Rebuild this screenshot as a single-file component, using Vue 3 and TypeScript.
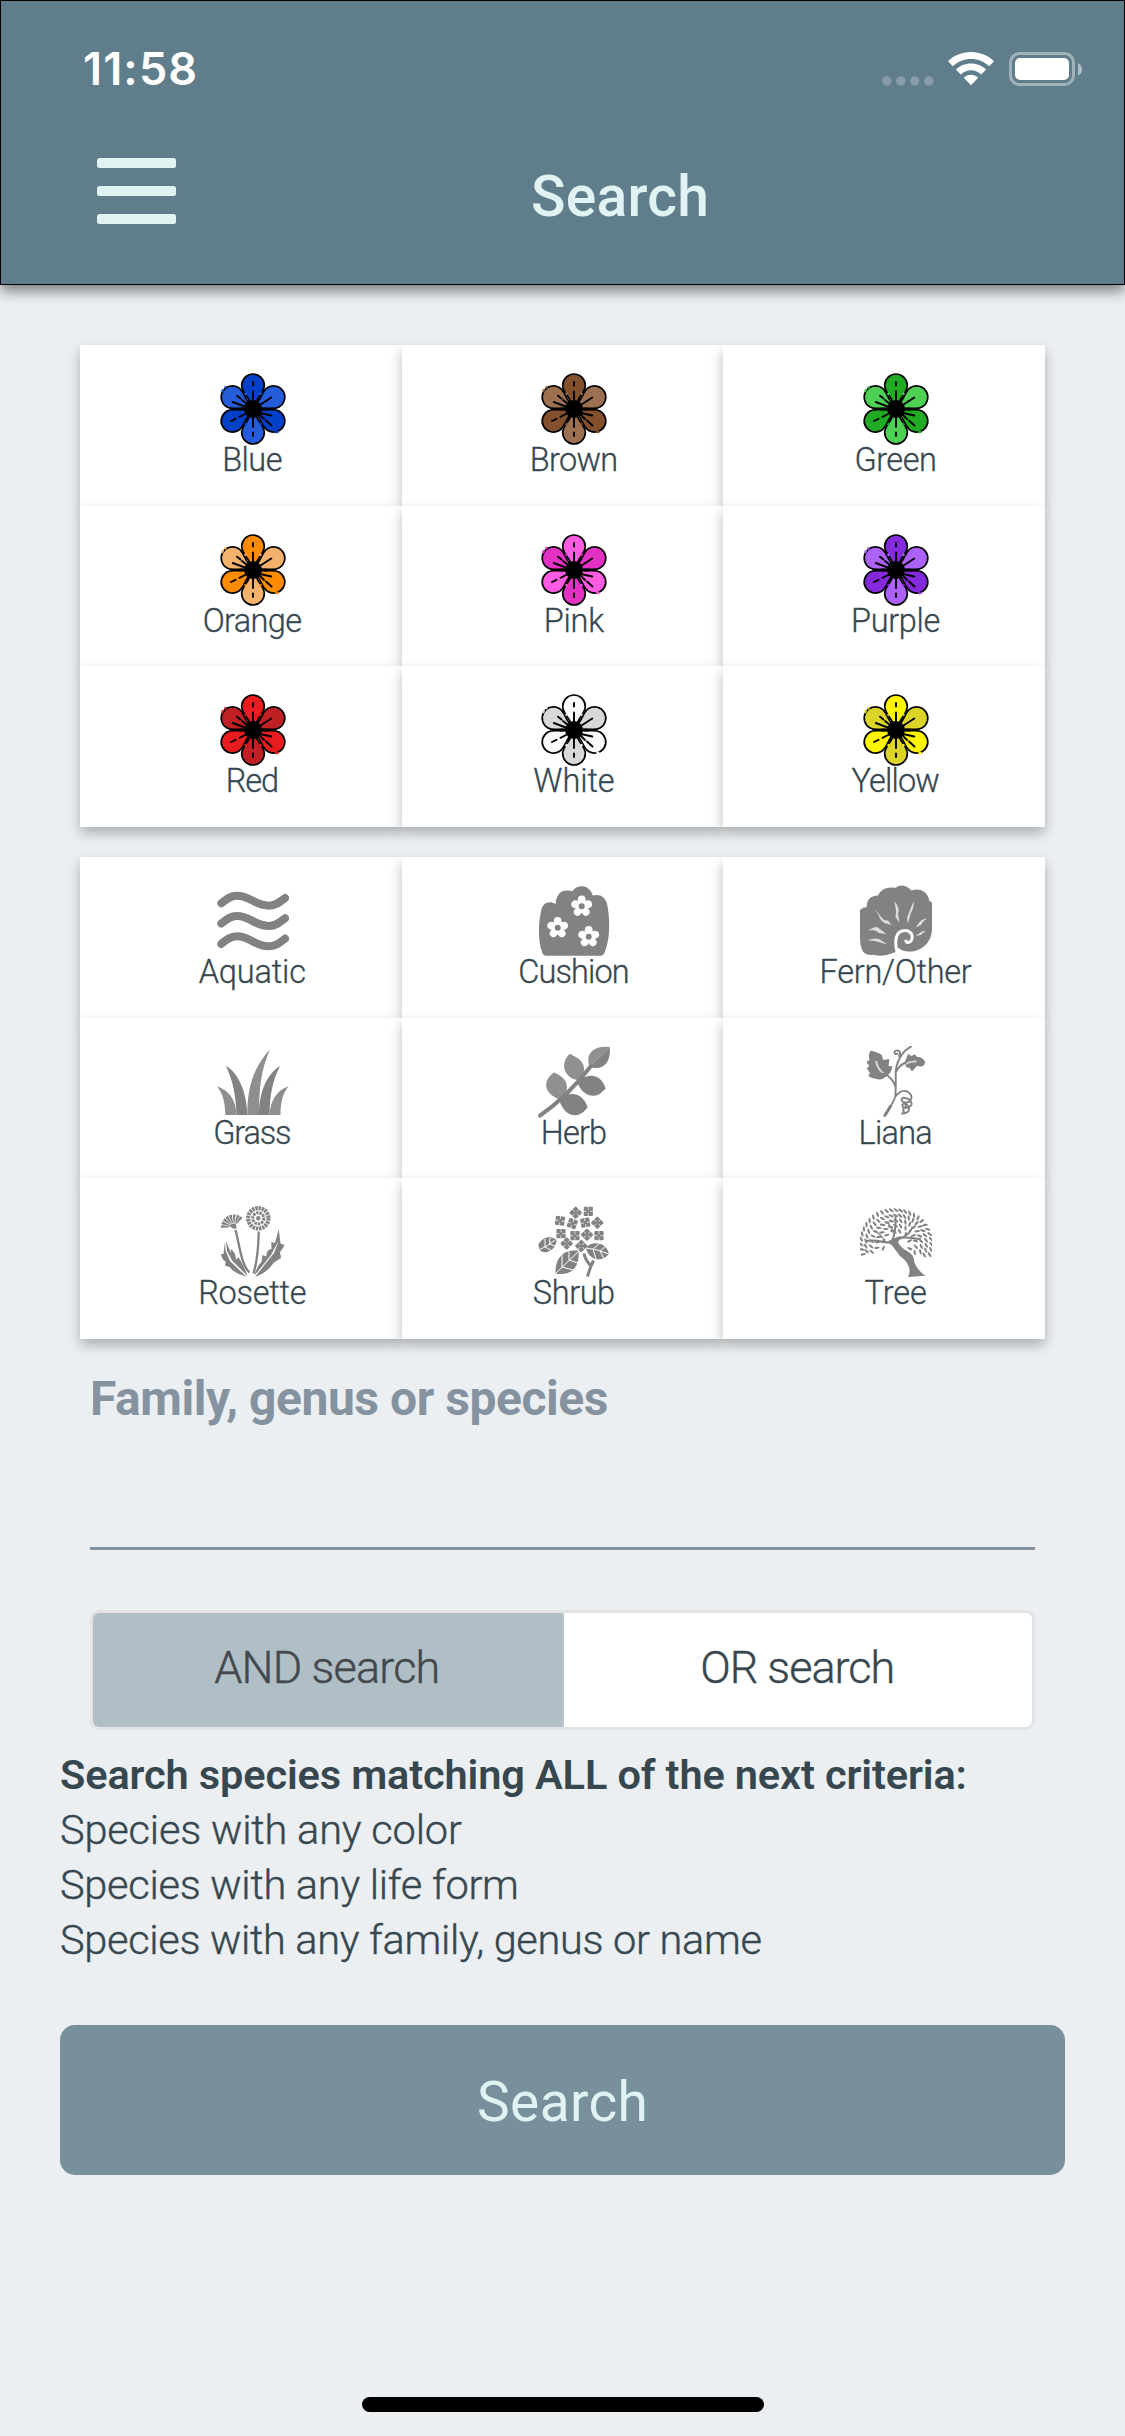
<script setup lang="ts">
interface ColorOption { name: string; width: number; main: string; alt: string }
interface FormOption { name: string; width: number; icon: string }
interface Leaf { x: number; y: number; r: number }

const colors: ColorOption[] = [
  { name: 'Blue', width: 58, main: '#0340c8', alt: '#245dd9' },
  { name: 'Brown', width: 86, main: '#83502d', alt: '#9e7052' },
  { name: 'Green', width: 80, main: '#21ab24', alt: '#4dd053' },
  { name: 'Orange', width: 97, main: '#ff8c00', alt: '#f4b26c' },
  { name: 'Pink', width: 58, main: '#ff5be3', alt: '#e231c3' },
  { name: 'Purple', width: 87, main: '#8429dc', alt: '#ac62f8' },
  { name: 'Red', width: 51, main: '#e91c1f', alt: '#be2023' },
  { name: 'White', width: 79, main: '#fcfafb', alt: '#d8d8d8' },
  { name: 'Yellow', width: 86, main: '#fff500', alt: '#ddd428' },
]

const forms: FormOption[] = [
  { name: 'Aquatic', width: 105, icon: 'aquatic' },
  { name: 'Cushion', width: 109, icon: 'cushion' },
  { name: 'Fern/Other', width: 150, icon: 'fern' },
  { name: 'Grass', width: 76, icon: 'grass' },
  { name: 'Herb', width: 64, icon: 'herb' },
  { name: 'Liana', width: 72, icon: 'liana' },
  { name: 'Rosette', width: 106, icon: 'rosette' },
  { name: 'Shrub', width: 80, icon: 'shrub' },
  { name: 'Tree', width: 60, icon: 'tree' },
]

const criteria = [
  { text: 'Species with any color', width: 399 },
  { text: 'Species with any life form', width: 456 },
  { text: 'Species with any family, genus or name', width: 699 },
]

const petalAngles = [0, 60, 120, 180, 240, 300]
const cushionFlowers = [[43.7, 21.3], [19.7, 42.7], [50.7, 51.7]]
const fiveAngles = [0, 72, 144, 216, 288]
const rayAngles = [-88, -70, -52, -34, -16, 3, 22, 38]

const shrubFlowers = [
  [37.7, 6.7, 45], [50.3, 5.3, 0], [22, 14.7, 8], [34.3, 17.6, 20], [47.3, 16.7, -10], [59.3, 16.7, 45],
  [23, 27.7, 0], [37, 29.7, 0], [49, 28.7, 45], [61, 29.7, 0], [28.7, 37.5, 45], [43.3, 40, 45],
]

// Foliage: rings of small leaves fanning out from the fork of the trunk.
const treeLeaves: Leaf[] = []
const rings = [
  { d: 0.96, n: 27 }, { d: 0.82, n: 24 }, { d: 0.68, n: 19 }, { d: 0.54, n: 14 }, { d: 0.4, n: 8 },
]
rings.forEach((ring, k) => {
  for (let i = 0; i < ring.n; i++) {
    const a = -196 + (212 * (i + (k % 2) * 0.4)) / (ring.n - 1)
    const t = (a * Math.PI) / 180
    const jitter = Math.sin(i * 12.9 + k * 7.3)
    const d = ring.d + jitter * 0.035
    treeLeaves.push({
      x: 36 + Math.cos(t) * 35.5 * d,
      y: 38.5 + Math.sin(t) * 37 * d,
      r: a + 90 + jitter * 60,
    })
  }
})

// Spreads the letters of a line so that it takes the given width.
const vFit = {
  mounted(el: HTMLElement, binding: { value: number }) {
    const size = parseFloat(getComputedStyle(el).fontSize)
    const count = (el.textContent ?? '').trim().length
    const spacing = (binding.value + size * 0.07 - el.getBoundingClientRect().width) / (count - 1)
    el.style.letterSpacing = `${spacing}px`
    el.style.marginRight = `${-spacing}px`
  },
}
</script>

<template>
  <div class="screen">
    <header class="header">
      <div class="status">
        <span v-fit="111" class="time">11:58</span>
        <div class="indicators">
          <svg class="dots" width="52" height="10" viewBox="0 0 52 10">
            <circle v-for="n in 4" :key="n" :cx="n * 14 - 9.2" cy="5" r="4.7" fill="#fff" fill-opacity=".25" />
          </svg>
          <svg class="wifi" width="46" height="34" viewBox="0 0 46 34">
            <path fill="#fff" d="M23 0C32 0 40.200 3.500 46 9.200L41.200 14.200C36.500 9.600 30 6.900 23 6.900S9.500 9.600 4.800 14.200L0 9.200C5.800 3.500 14 0 23 0ZM23 11.400C28.900 11.400 34.200 13.700 38.100 17.400L33.200 22.500C30.500 20 27 18.300 23 18.300S15.500 20 12.800 22.500L7.900 17.400C11.800 13.700 17.100 11.400 23 11.400ZM23 22.800C25.800 22.800 28.300 23.900 30.200 25.700L23 33.200L15.800 25.700C17.700 23.900 20.200 22.800 23 22.800Z" />
          </svg>
          <svg class="battery" width="74" height="35" viewBox="0 0 74 35">
            <rect x="1.500" y="1.500" width="63" height="31" rx="9" fill="none" stroke="#fff" stroke-opacity=".4" stroke-width="3" />
            <rect x="6" y="6" width="54" height="22" rx="5" fill="#fff" />
            <path d="M69 11.500Q73 13 73 17.500T69 23.500Z" fill="#fff" fill-opacity=".5" />
          </svg>
        </div>
      </div>
      <div class="nav">
        <svg class="menu" width="79" height="66" viewBox="0 0 79 66">
          <rect v-for="n in 3" :key="n" x="0" :y="n * 28 - 28" width="79" height="10" rx="2.500" fill="#e0f2f1" />
        </svg>
        <h1 v-fit="174" class="title">Search</h1>
      </div>
    </header>

    <main class="content">
      <section class="grid">
        <div v-for="c in colors" :key="c.name" class="cell">
          <svg class="icon" viewBox="0 0 72 72">
            <path
              v-for="(a, i) in petalAngles" :key="a"
              d="M36 36L31 25.500C28 20.500 24.700 17.500 24.700 12.500A11.300 11.500 0 0 1 47.300 12.500C47.300 17.500 44 20.500 41 25.500Z"
              :fill="i % 2 ? c.alt : c.main" stroke="#000" stroke-width="1.700" :transform="`rotate(${a} 36 36)`"
            />
            <path :stroke="c.alt" stroke-width="2.200" d="M4.800 19L6.200 16.200M7.600 15L9.400 13.300M44 19.800L43 21.800M28 19.800L29 21.800" />
            <path :stroke="c.main" stroke-width="2.200" d="M58.500 59.300L61.500 58.700M28 52.200L29 50.200M44 52.200L43 50.200" />
            <circle cx="36" cy="36" r="9" fill="#000" />
            <path
              fill="none" stroke="#000" stroke-width="1.900" stroke-linecap="round"
              d="M36 9V12.500M36 18.500V28M36 44V54M36 59.500V63M42 32.500L54.300 24.500M43 40L54.300 42.500M42.500 41.500L47 46M49 47.500L54.500 52.500M45 36H48M24 36H27M15.800 29L29 34M20 22.700L23.500 25.500M25 27L30 31M14 48L18.500 45.800M22.500 43.800L29 40.500M30 46.500L32 43M42 25.500L40 29"
            />
          </svg>
          <span v-fit="c.width" class="label">{{ c.name }}</span>
        </div>
      </section>

      <section class="grid forms">
        <div v-for="f in forms" :key="f.name" class="cell">
          <svg class="icon" viewBox="0 0 72 72">
            <g v-if="f.icon === 'aquatic'" fill="none" stroke="#828282" stroke-width="8" stroke-linecap="round">
              <path v-for="n in 3" :key="n" :transform="`translate(0 ${(n - 1) * 20.3})`" d="M4.300 18.300C9 14.500 13 10.700 20 10.700C33 10.700 38 20.700 52 20.700C59 20.700 63 17 68 13" />
            </g>

            <g v-else-if="f.icon === 'cushion'">
              <path fill="#828282" d="M8 70.700Q5.500 70.700 4.200 67.500C-.500 55 .500 37 3.300 25C5 17.500 11.500 15.200 17.700 19C18 10 23 3 34.300 6.300C40-2 52 0 54.800 10.500C62 8.500 67 12 69 18.500C72 33 72.500 53 67 66.500Q65.500 70.700 62.500 70.700Z" />
              <g v-for="(p, i) in cushionFlowers" :key="i" :transform="`translate(${p[0]} ${p[1]})`">
                <ellipse v-for="a in fiveAngles" :key="a" cx="0" cy="-6.500" rx="3.900" ry="4.300" fill="#fff" :transform="`rotate(${a})`" />
                <circle r="5" fill="#fff" /><circle r="3" fill="#828282" />
              </g>
            </g>

            <g v-else-if="f.icon === 'fern'">
              <path fill="#828282" d="M0 25Q3 22 6.700 22Q6.500 11 18 10.500Q22 1 35.500 2.700Q43-3 51.500 5.500C60 2.500 68 7 69.500 16L72 17.500V43C72 59 60 66.500 50 66.500C44 66.500 40.500 65 38.500 62.500L36 67C27 70.500 20 72 14 69.800Q6 71 2.500 66Q0 60 0 54Z" />
              <path fill="none" stroke="#fff" stroke-width="3" stroke-linecap="round" d="M37 67C34.500 56 35.500 47 43 45.700C49 44.700 53 48.500 52 53.500C51 58 47 58.500 45.800 56" />
              <path fill="#dedede" d="M14.500 23.500L22 33Q24 36 28 35.500L31.500 40L24.500 38Q20 35 19 31ZM34.300 16C38 21 40 25 38 29L39.500 38L35.500 32Q36 28 36 25ZM53.700 16C54 22 52.500 25 50.500 29L48 38.500L47 33Q48.500 29 50 25ZM67 33.500Q61 34 59 38L55.500 42.500L61 40Q62 37 67 33.500ZM66 46.500Q61 45.500 60 48L55.500 51L61 50Q62 48 66 46.500ZM7.500 45.500L15 42Q18 41.500 21 45L26.500 49L19 48Q16 45.500 13 45ZM7 55.500Q15 52.500 19 54L27.500 59.500L20 57.500Q14 55 7 55.500Z" />
            </g>

            <g v-else-if="f.icon === 'grass'">
              <path fill="#8f8f8f" d="M53 3.300C36 22 30.300 42 30.300 69H42C42 42 44 24 53 3.300ZM71.700 40.300C60 44 53 55 52.700 69H63.500C63.500 56 66 47 71.700 40.300ZM0 40.300C11 44 19 53 19.500 69H8.300C8.300 57 6 48 0 40.300Z" />
              <path fill="#828282" d="M63 20C50 28 42 46 42 69H52.700C52.700 50 55 36 63 20ZM9 20C22 27 30 48 30.300 69H19.500C19 50 16 35 9 20Z" />
            </g>

            <g v-else-if="f.icon === 'herb'">
              <path fill="#909090" d="M51.500 21C47 8 55-1 71.700 1ZM41.500 34C29 34 20 20 31 8.500Q32 7.500 34 9C48 15 49 25 41.500 34ZM23.500 54C9 50 2 38 15 27Q16 26 18 27.500C31 33 32 44 23.500 54Z" />
              <path fill="#828282" d="M51.500 21L71.700 1C73 16 66 25 51.500 21ZM39 36C50 26 63 28 67.500 42Q68 43.500 66 44C58 54 45 51 39 36ZM21 53.500C32 44 45 47 49.500 61Q49.500 62.500 48 63.200C39 74 26 70 21 53.500Z" />
              <path fill="none" stroke="#828282" stroke-width="4" stroke-linecap="round" d="M2 69.700Q30 50 53 20" />
            </g>

            <g v-else-if="f.icon === 'liana'">
              <path fill="#828282" d="M10.700 4.700Q18 6 21.700 9L23.300 14L29.300 13L28.500 20L32.500 20.500Q31.500 25 30 27.300L26 30.500Q22 34.500 17.700 33.300Q12 33 8.300 30L10 27L6.700 22.300L9.300 20L6.500 16L9.500 14Q8 8 10.700 4.700ZM45 16L48 8L51.500 10L55 8.200L57 11Q62 10.500 65.300 16Q64 20 61.500 20.500L57 20L52 25.500L49.500 22L46 21Z" />
              <path fill="none" stroke="#d6d6d6" stroke-width="2" d="M16 15Q17 22 23.500 27.500M56.500 15.500Q50 15 45.500 18" />
              <path fill="none" stroke="#828282" stroke-width="1.900" stroke-linecap="round" d="M23 27.500L28 30Q34 35 35.500 41M51 .500L45 4.700Q36 15 35.700 26Q36 42 35.300 50Q35 54 24.500 70M46 16.500Q39 19 36 26M39 10C42 6 38 3.500 35.500 4.800C33 6.500 36 9.500 37.500 7.500M35 51Q41 43 47 45.500C54 49 52 56 46 56.500C41 57 40 50.500 45 52C52 53 54 60 48 61.500C41 63 41 57 45 58C50 59 52 67 42 67.500M46 60C43 62 42 65 45 67" />
              <path stroke="#828282" stroke-width="3" d="M31 59.500L24.500 70" />
            </g>

            <g v-else-if="f.icon === 'rosette'">
              <g fill="none" stroke="#828282">
                <circle cx="41.300" cy="12.300" r="10.200" stroke-width="4.200" stroke-dasharray="2.400 .8" />
                <circle cx="41.300" cy="12.300" r="5.500" stroke-width="3" stroke-dasharray="2.400 .9" />
                <circle cx="41.300" cy="12.300" r="1.200" stroke-width="2" />
                <path stroke-width="2.300" d="M18.500 24C22 36 24 59 32.500 66.500M41.700 25.500C41.500 40 40 56 36.500 67.500" />
              </g>
              <path v-for="a in rayAngles" :key="a" fill="#828282" d="M-.400-4L-1.500-12.500H1.500L.400-4Z" :transform="`translate(16.700 21) rotate(${a})`" />
              <path fill="#828282" d="M12.500 20Q16 16 19 18.500L19.500 22.500Q16 23.500 12.500 20Z" />
              <path fill="#828282" d="M61.700 23L63.500 37.500L67.500 39Q65 44 63 46L64 52L57 56.500Q50 67 38 71L49 57L57 47L62 34L54 49L40 66.500L37.500 69.500Q40 60 44.500 56L45.500 49L49.500 50.500Q49 44 54.500 43L54.300 36L58 37Z" />
              <path fill="#828282" d="M8 35.500L8.500 44.500L13 55L29.500 70.800Q17 67 12.500 61L8 59.500L8.700 55.500Q5 54 4 48L6.500 48ZM9 35L14 47L14 43Q19 47 19 54L21 51Q26 57 30.500 70L15 54.500L10 45Z" />
            </g>

            <g v-else-if="f.icon === 'shrub'">
              <g v-for="(p, i) in shrubFlowers" :key="i" :transform="`translate(${p[0]} ${p[1]}) rotate(${p[2]})`">
                <rect x="-4.600" y="-4.600" width="9.200" height="9.200" rx="1" fill="#828282" />
                <path stroke="#fff" stroke-width=".7" d="M0-5V-1.500M0 1.500V5M-5 0H-1.500M1.500 0H5" />
              </g>
              <path fill="#828282" d="M.200 39C4 31 13 29 18.500 34C18 44 8 49 2 44.500ZM40.500 45C30 43 17 48 17.500 67.500C31 70 42 64 40.500 45ZM48 42C52 35 68 35 71 47.500C66 56 51 56 48 42Z" />
              <path fill="none" stroke="#fff" stroke-width="1" d="M1 44Q10 40 17 34M7 33V41L13 44M12 32L11.500 38L17 40M18 67L40 46M24 48.500V61L35 64M31 45.500V54L40 57M48 42Q59 43 71 48M55 43L62 37M55 43L58 53M62 45L68 40M62 45L66 53" />
              <path fill="none" stroke="#828282" stroke-width="3" d="M46 47.500Q47 53 52 59M55.500 54.500L52.500 61L49.500 70.500" />
            </g>

            <g v-else>
              <ellipse v-for="(l, i) in treeLeaves" :key="i" rx="1.100" ry="2.800" fill="#828282" :transform="`translate(${l.x} ${l.y}) rotate(${l.r})`" />
              <path fill="none" stroke="#828282" stroke-linecap="round" stroke-width="2" d="M31 37C35 30 36 22 35.500 11M30 36.500C24 37 18 33 6 35M35 35C43 29 49 32 60 33" />
              <path fill="none" stroke="#828282" stroke-linecap="round" stroke-width="1.400" d="M25 36C23 31 20 28 15 25M43 31C48 29 51 26 52 21M36 27C31 23 29 20 28 16" />
              <path fill="#828282" d="M27 35.500Q33 33 37 31L42 30L38 36Q40 41 47 45Q54 48 54.500 57Q58 65 65.500 69.700L48 71Q51 65 48.500 60Q46 54 40 50Q34 42 31.500 39Z" />
            </g>
          </svg>
          <span v-fit="f.width" class="label">{{ f.name }}</span>
        </div>
      </section>

      <div class="field">
        <label v-fit="515" class="field-label">Family, genus or species</label>
        <div class="input"></div>
      </div>

      <div class="toggle">
        <div class="option active"><span v-fit="223">AND search</span></div>
        <div class="option"><span v-fit="192">OR search</span></div>
      </div>

      <div class="summary">
        <div><strong v-fit="904">Search species matching ALL of the next criteria:</strong></div>
        <div v-for="c in criteria" :key="c.text"><span v-fit="c.width">{{ c.text }}</span></div>
      </div>

      <button class="submit" type="button"><span v-fit="167">Search</span></button>
    </main>

    <div class="home-indicator"></div>
  </div>
</template>

<style>
body {
  background: #ebeff2;
}
</style>

<style scoped>
.screen {
  box-sizing: border-box;
  width: 1125px;
  height: 2436px;
  display: flex;
  flex-direction: column;
  overflow: hidden;
  background: #ebeff2;
  color: #37474f;
  font-family: Roboto, "Liberation Sans", sans-serif;
}
.screen span,
.screen strong,
.field-label {
  display: inline-block;
  white-space: nowrap;
}
.header {
  box-sizing: border-box;
  flex: none;
  height: 285px;
  border: 1px solid #000;
  background: #607d8b;
  box-shadow: 0 6px 13px rgba(0, 0, 0, 0.48);
}
.status {
  display: flex;
  justify-content: space-between;
  height: 54px;
  padding: 41px 41px 0 82px;
}
.time {
  color: #fff;
  font: 600 45px/54px Inter, sans-serif;
}
.indicators {
  display: flex;
  align-items: flex-start;
  padding-top: 10px;
}
.dots {
  margin: 24px 14px 0 0;
}
.wifi {
  margin-right: 15px;
}
.nav {
  display: flex;
  align-items: flex-start;
  padding-left: 96px;
}
.menu {
  margin-top: 62px;
}
.title {
  margin: 67px 0 0 355px;
  color: #e0f2f1;
  font-size: 57px;
  font-weight: 500;
  line-height: 68px;
}
.content {
  flex: 1;
  display: flex;
  flex-direction: column;
  padding: 60px 60px 0;
}
.grid {
  display: grid;
  grid-template-columns: repeat(3, 1fr);
  grid-template-rows: repeat(3, 160.5px);
  margin: 0 20px;
}
.forms {
  margin-top: 30.5px;
}
.cell {
  display: flex;
  flex-direction: column;
  align-items: center;
  padding: 28px 0 0 23px;
  background: #fff;
  box-shadow: 0 6px 12px rgba(0, 0, 0, 0.27);
}
.icon {
  width: 72px;
  height: 72px;
  margin-left: 1px;
}
.label {
  font-size: 32.5px;
  font-weight: 300;
  line-height: 30px;
  -webkit-text-stroke: 0.3px currentColor;
}
.field {
  display: flex;
  flex-direction: column;
  align-items: flex-start;
  margin: 32.5px 30px 0;
}
.field-label {
  color: #8593a0;
  font-size: 48px;
  font-weight: 700;
  line-height: 56px;
}
.input {
  box-sizing: border-box;
  width: 100%;
  height: 123px;
  border-bottom: 3px solid #8593a0;
}
.toggle {
  box-sizing: border-box;
  display: flex;
  height: 120px;
  margin: 60px 30px 0;
  overflow: hidden;
  border: 3px solid #e3e3e3;
  border-radius: 9px;
  background: #fff;
}
.option {
  flex: 1;
  text-align: center;
  font-size: 45px;
  font-weight: 300;
  line-height: 110px;
  -webkit-text-stroke: 0.4px currentColor;
}
.active {
  border-right: 2px solid #b9c6cd;
  background: #b0bec5;
  color: #43484d;
}
.summary {
  display: flex;
  flex-direction: column;
  margin-top: 17px;
  font-size: 41.5px;
  font-weight: 300;
  line-height: 56px;
}
.summary div {
  height: 55px;
}
.summary span {
  -webkit-text-stroke: 0.4px currentColor;
}
.summary strong {
  font-weight: 600;
}
.submit {
  height: 150px;
  margin-top: 58px;
  padding: 3px 0 0;
  border: 0;
  border-radius: 15px;
  background: #78909c;
  color: #e0f2f1;
  font: 400 55px/64px Roboto, sans-serif;
}
.home-indicator {
  align-self: center;
  width: 402px;
  height: 15px;
  margin-bottom: 24px;
  border-radius: 8px;
  background: #000;
}
</style>
